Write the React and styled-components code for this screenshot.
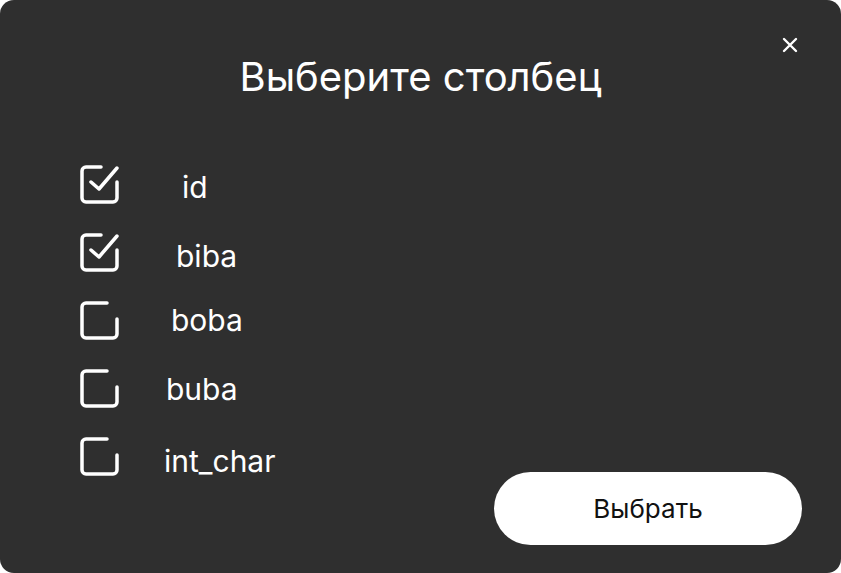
import React, { useState } from "react";
import styled, { createGlobalStyle } from "styled-components";

const GlobalStyle = createGlobalStyle`
  html, body {
    margin: 0;
    padding: 0;
    background: #ffffff;
  }
  body {
    font-family: Inter, "Noto Sans", sans-serif;
  }
`;

const columns = [
  { name: "id", checked: true, indent: 63, shift: 1 },
  { name: "biba", checked: true, indent: 57, shift: 2 },
  { name: "boba", checked: false, indent: 52, shift: -2 },
  { name: "buba", checked: false, indent: 47, shift: -1 },
  { name: "int_char", checked: false, indent: 45, shift: 3 },
];

const CheckIcon = ({ checked }) => (
  <svg width="40" height="40" viewBox="0 0 40 40" fill="none">
    <path
      d={
        checked
          ? "M22 3H7a4 4 0 0 0-4 4v27a4 4 0 0 0 4 4h27a4 4 0 0 0 4-4V18"
          : "M28 3H7a4 4 0 0 0-4 4v27a4 4 0 0 0 4 4h27a4 4 0 0 0 4-4V19"
      }
      stroke="#fff"
      strokeWidth="3.5"
      strokeLinecap="round"
      strokeLinejoin="round"
    />
    {checked && (
      <path
        d="M12 18l8 7L38 4"
        stroke="#fff"
        strokeWidth="3.5"
        strokeLinecap="round"
        strokeLinejoin="round"
      />
    )}
  </svg>
);

const App = () => {
  const [items, setItems] = useState(columns);
  const toggle = (i) => {
    setItems(items.map((it, idx) => (idx === i ? { ...it, checked: !it.checked } : it)));
  };
  return (
    <>
      <GlobalStyle />
      <Modal>
        <CloseButton aria-label="close">
          <svg width="16" height="16" viewBox="0 0 16 16">
            <path d="M2 2l12 12M14 2L2 14" stroke="#fff" strokeWidth="2.4" strokeLinecap="round" />
          </svg>
        </CloseButton>
        <Title>Выберите столбец</Title>
        <Body>
          <List>
            {items.map((it, i) => (
              <Row key={it.name} onClick={() => toggle(i)}>
                <CheckIcon checked={it.checked} />
                <Label $indent={it.indent} $shift={it.shift}>{it.name}</Label>
              </Row>
            ))}
          </List>
          <SubmitButton>Выбрать</SubmitButton>
        </Body>
      </Modal>
    </>
  );
};

const Modal = styled.div`
  position: relative;
  box-sizing: border-box;
  width: 100vw;
  height: 100vh;
  background-color: #2f2f2f;
  border-radius: 14px;
  display: flex;
  flex-direction: column;
  padding: 50px 39px 28px 79px;
`;
const CloseButton = styled.button`
  position: absolute;
  top: 37px;
  right: 43px;
  width: 16px;
  height: 16px;
  padding: 0;
  border: none;
  background: none;
  cursor: pointer;
  display: flex;
`;
const Title = styled.h2`
  margin: 0;
  margin-left: -40px;
  text-align: center;
  color: #fff;
  font-size: 40px;
  font-weight: 400;
  line-height: 54px;
`;
const Body = styled.div`
  flex: 1;
  display: grid;
  grid-template-columns: 1fr auto;
  margin-top: 60px;
`;
const List = styled.div`
  display: flex;
  flex-direction: column;
  gap: 28px;
  align-self: start;
`;
const Row = styled.div`
  display: flex;
  align-items: center;
  height: 40px;
  cursor: pointer;
`;
const Label = styled.span`
  margin-left: ${(p) => p.$indent}px;
  color: #fff;
  font-size: 30px;
  line-height: 40px;
  padding-top: ${(p) => 4 + p.$shift * 2}px;
`;
const SubmitButton = styled.button`
  align-self: end;
  width: 308px;
  height: 73px;
  border: none;
  border-radius: 37px;
  background-color: #fff;
  color: #111;
  font-family: Inter, sans-serif;
  font-size: 26px;
  cursor: pointer;
`;

export default App;
